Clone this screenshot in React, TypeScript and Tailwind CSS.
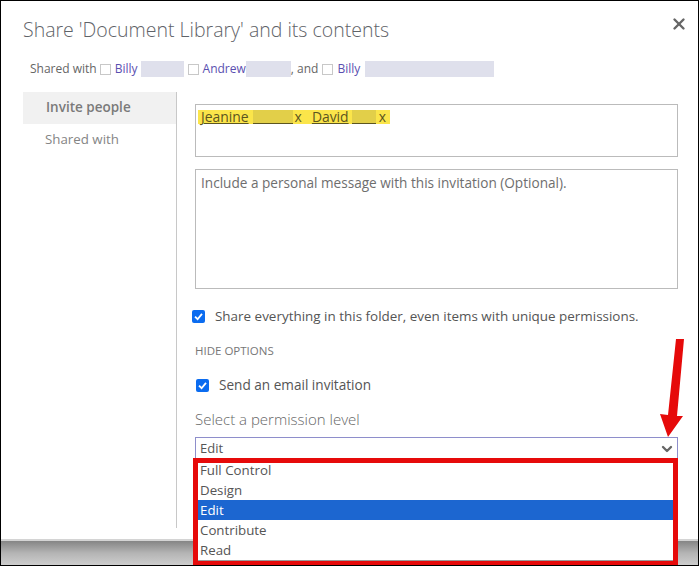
import { ChevronDown, X } from "lucide-react"

const Blur = ({ w }: { w: string }) => <span className={`inline-block h-[16px] bg-[#dfe0ec] ${w}`} />

const Box = () => <span className="mx-[4px] inline-block h-[11px] w-[11px] border border-[#c8c8c8] bg-white" />

const Tick = () => (
  <span className="flex h-[13px] w-[13px] shrink-0 items-center justify-center rounded-[2px] bg-[#0b6cf0]">
    <svg viewBox="0 0 12 12" className="h-[11px] w-[11px]" fill="none" stroke="white" strokeWidth="2">
      <path d="M2.2 6.2 L5 9 L9.8 3.2" />
    </svg>
  </span>
)

const options = ["Full Control", "Design", "Edit", "Contribute", "Read"]

export default function App() {
  return (
    <div className="relative flex h-[566px] w-[699px] flex-col overflow-hidden border border-black bg-[#c8c8c8] font-['Open_Sans',sans-serif] text-[#605e5c]">
      <div className="h-[540px] shrink-0 border-b-2 border-[#d4d4d4] bg-white pl-[22px] pr-[20px] pt-[13px]">
        <div className="flex items-start justify-between">
          <h1 className="text-[19.5px] font-light leading-[32px] text-[#5f6368]">Share 'Document Library' and its contents</h1>
          <X className="mr-[-10px] mt-[1px] h-[18px] w-[18px] text-[#666]" strokeWidth={3.2} />
        </div>
        <div className="mt-[13px] flex h-[20px] items-center pl-[7px] text-[12px] text-[#666]">
          Shared with
          <span className="ml-[3px] mr-[4px] inline-block h-[11px] w-[11px] border border-[#c8c8c8] bg-white" />
          <span className="text-[#5a4fb0]">Billy</span>
          <Blur w="ml-[3px] w-[43px]" />
          <Box />
          <span className="text-[#5a4fb0]">Andrew</span>
          <Blur w="w-[45px]" />
          <span>, and</span>
          <Box />
          <span className="text-[#5a4fb0]">Billy</span>
          <Blur w="ml-[5px] w-[129px]" />
        </div>
        <div className="mt-[13px] flex">
          <div className="h-[436px] w-[154px] shrink-0 border-r border-[#c8c8c8]">
            <div className="flex h-[32px] items-center bg-[#f1f1f1] pb-[1px] pl-[23px] text-[13.5px] font-semibold text-[#7a7a7a]">Invite people</div>
            <div className="mt-[5px] pl-[22px] text-[13.3px] leading-[20px] text-[#858585]">Shared with</div>
          </div>
          <div className="relative flex-1 pl-[18px] pt-[12px]">
            <div className="h-[53px] w-[483px] border border-[#bbbbbb] px-[2px] pt-[5px]">
              <div className="flex h-[14px] w-fit items-center bg-[#fbe54a] pl-[3px] pr-[4px] pt-[1px] text-[13.9px] text-[#5c5520]">
                <span className="underline">Jeanine</span>
                <span className="ml-[4px] mt-[-1px] h-[14px] w-[40px] border-b border-[#5c5520] bg-[#e2cf49]" />
                <span className="ml-[2px]">x</span>
                <span className="ml-[10px] underline">David</span>
                <span className="ml-[3px] mt-[-1px] h-[14px] w-[24px] border-b border-[#5c5520] bg-[#e2cf49]" />
                <span className="ml-[3px]">x</span>
              </div>
            </div>
            <div className="mt-[12px] h-[120px] w-[483px] border border-[#bbbbbb] px-[5px] py-[4px] text-[13.6px] leading-[18px] text-[#6e6e6e]">
              Include a personal message with this invitation (Optional).
            </div>
            <div className="ml-[-3px] mt-[20px] flex h-[14px] items-center gap-[10px] text-[13.45px] text-[#555]">
              <Tick />
              <span>Share everything in this folder, even items with unique permissions.</span>
            </div>
            <div className="mt-[21px] text-[11.5px] leading-[14px] text-[#777]">HIDE OPTIONS</div>
            <div className="mt-[20px] flex h-[14px] items-center gap-[10px] pl-[1px] text-[13.6px] text-[#555]">
              <Tick />
              <span>Send an email invitation</span>
            </div>
            <div className="mt-[17px] text-[15px] font-light leading-[20px] text-[#666]">Select a permission level</div>
            <div className="mt-[8px] flex h-[24px] w-[483px] items-center justify-between border border-[#8e8ecb] pl-[4px] pr-[2px] text-[13px] text-[#555]">
              Edit
              <ChevronDown className="h-[16px] w-[16px] text-[#666]" strokeWidth={3.5} />
            </div>
          </div>
        </div>
      </div>
      <div className="h-full bg-gradient-to-b from-[#858585] via-[#b4b4b4] to-[#cdcdcd]" />

      {/* dropdown list */}
      <div className="absolute left-[192px] top-[457px] h-[107px] w-[485px] border-[5px] border-[#e60a0a] bg-white text-[13.3px] text-[#555]">
        <div className="border-b border-[#9a9a9a]">
          {options.map((o, i) => (
            <div
              key={o}
              className={`flex items-center pl-[2px] ${i === 0 ? "h-[17px] pb-[1px]" : "h-[20px] pt-[2px]"} ${o === "Edit" ? "bg-[#1c66d0] text-white" : ""}`}
            >
              {o}
            </div>
          ))}
        </div>
      </div>

      {/* red arrow annotation */}
      <svg className="absolute left-[655px] top-[336px] h-[102px] w-[32px]" viewBox="0 0 32 102" fill="#e60a0a">
        <path d="M20 2 L28 2 L21 79 L27 79 L12 100 L4 77 L12 78 Z" />
      </svg>
    </div>
  )
}
